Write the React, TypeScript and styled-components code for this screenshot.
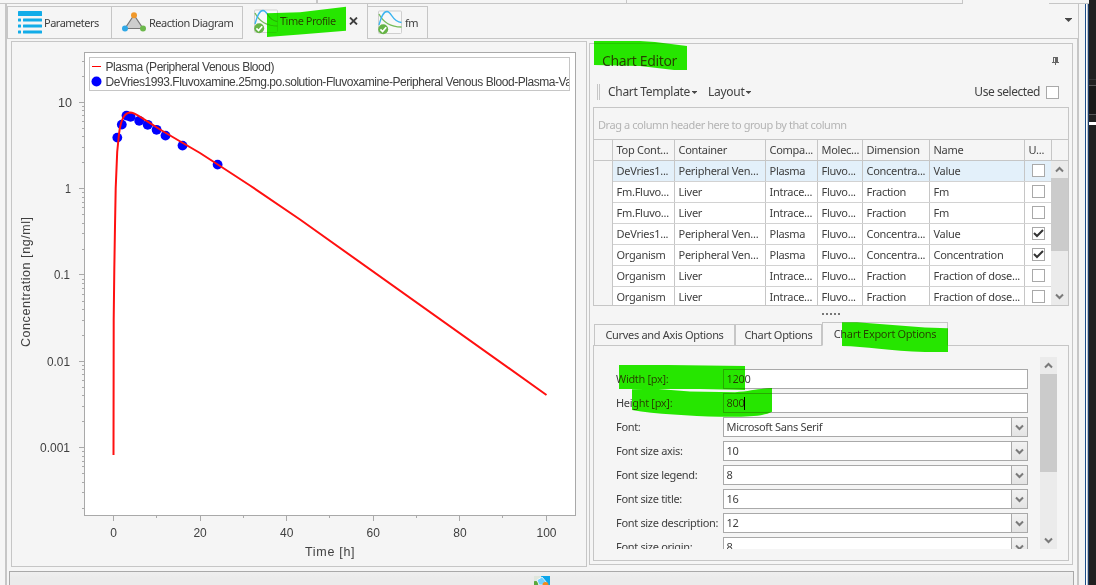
import React from "react";
import styled, { createGlobalStyle, css } from "styled-components";

const line = "#c6c6c6";
const dark = "#a9a9a9";
const ink = "#404040";
const face = "#f5f5f5";

const GlobalStyle = createGlobalStyle`
  * { box-sizing: border-box; }
  html, body { margin: 0; padding: 0; overflow: hidden; }
  body {
    background: ${face};
    color: ${ink};
    font-family: "Noto Sans", "Open Sans", sans-serif;
    font-size: 11px;
    line-height: 14px;
  }
  svg { display: block; }
`;

const Page = styled.div`
  position: relative;
  width: 1096px;
  height: 585px;
  overflow: hidden;
  display: flex;
  flex-direction: column;
  background: ${face};
`;

/* ---------- window frame ---------- */
const TopStrip = styled.div`
  display: flex;
  height: 4px;
  flex: none;
`;
const StripCell = styled.div<{ $w: number; $edge?: number; $open?: boolean }>`
  width: ${(p) => p.$w}px;
  border-bottom: ${(p) => (p.$open ? "none" : `1px solid ${line}`)};
  border-right: ${(p) => p.$edge ?? 0}px solid ${line};
`;
const DarkEdge = styled.div`
  width: 7px;
  background: #202020;
`;
const Frame = styled.div`
  display: flex;
  flex: 1;
  min-height: 0;
`;
const Gutter = styled.div`
  width: 5px;
`;
const Window = styled.div`
  width: 1074px;
  border-left: 2px solid ${line};
  border-right: 1px solid ${line};
  display: flex;
  flex-direction: column;
`;
const RightRail = styled.div`
  width: 10px;
  display: flex;
  justify-content: flex-end;
`;
const RailLine = styled.div<{ $c: string; $w?: number }>`
  width: ${(p) => p.$w ?? 1}px;
  background: ${(p) => p.$c};
`;
const Desktop = styled.div`
  width: 7px;
  background: #202020;
  display: flex;
  flex-direction: column;
`;
const DesktopBand = styled.div<{ $h: number; $c: string }>`
  height: ${(p) => p.$h}px;
  background: ${(p) => p.$c};
`;

/* ---------- document tabs ---------- */
const TabBar = styled.div`
  height: 35px;
  flex: none;
  display: flex;
  align-items: flex-end;
  border-bottom: 1px solid ${line};
`;
const DocTab = styled.div<{ $w: number; $active?: boolean }>`
  width: ${(p) => p.$w}px;
  height: ${(p) => (p.$active ? 35 : 32)}px;
  margin-bottom: ${(p) => (p.$active ? -1 : 0)}px;
  display: flex;
  align-items: center;
  white-space: nowrap;
  border: 1px solid ${line};
  border-bottom: none;
  ${(p) =>
    p.$active
      ? css`
          background: ${face};
          border-top: none;
          padding: 0 0 1px 11px;
        `
      : css`
          padding-left: 10px;
          & > svg { margin-bottom: 1px; }
        `}
  & + & { border-left-width: ${(p) => (p.$active ? 1 : 0)}px; }
`;
const TabText = styled.span<{ $gap?: number }>`
  margin-left: ${(p) => p.$gap ?? 3}px;
  letter-spacing: -0.5px;
`;
const CloseIcon = styled.svg`
  margin-left: 13px;
`;
const TabMenu = styled.div`
  margin-left: auto;
  align-self: flex-start;
  padding: 14px 6px 0 0;
`;

/* ---------- body ---------- */
const Body = styled.div`
  height: 528px;
  flex: none;
  display: flex;
  align-items: flex-start;
  padding: 2px 0 0 4px;
  border-right: 1px solid ${line};
`;
const ChartPanel = styled.div`
  width: 576px;
  height: 526px;
  border: 1px solid ${line};
`;
const Editor = styled.div`
  width: 484px;
  height: 522px;
  margin: 2px 0 0 2px;
  border: 1px solid ${line};
  padding-left: 3px;
`;
const StatusRow = styled.div`
  flex: 1;
  border-right: 1px solid ${line};
  padding: 4px 3px 0 2px;
`;
const StatusBar = styled.div`
  height: 20px;
  border: 1px solid ${dark};
  background: linear-gradient(#efefef, #ebebeb 6px);
  display: flex;
  justify-content: center;
  padding: 4px 0 0 0;
`;

/* ---------- chart editor ---------- */
const EditorTitle = styled.div`
  display: flex;
  align-items: center;
  justify-content: space-between;
  height: 33px;
  padding: 1px 13px 0 9px;
  font-size: 14px;
  letter-spacing: -0.35px;
`;
const Toolbar = styled.div`
  display: flex;
  align-items: center;
  height: 30px;
  font-size: 12px;
  padding: 0 13px 0 4px;
  letter-spacing: -0.3px;
`;
const Grip = styled.div`
  width: 3px;
  height: 16px;
  border: solid ${line};
  border-width: 0 1px;
`;
const MenuButton = styled.div`
  display: flex;
  align-items: center;
  gap: 2px;
  margin-left: 8px;
  & + & { margin-left: 11px; }
`;
const UseSelected = styled.label`
  margin-left: auto;
  display: flex;
  align-items: center;
  gap: 6px;
  letter-spacing: -0.45px;
`;
const Check = styled.span`
  width: 13px;
  height: 13px;
  flex: none;
  border: 1px solid ${dark};
  background: #fff;
`;

/* ---------- grid ---------- */
const GridBox = styled.div`
  width: 476px;
  height: 199px;
  border: 1px solid ${line};
  overflow: hidden;
`;
const GroupHint = styled.div`
  height: 32px;
  padding: 10px 0 0 4px;
  border-bottom: 1px solid ${line};
  color: #b4b4b4;
  letter-spacing: -0.43px;
`;
const GridHead = styled.div`
  display: flex;
  height: 21px;
  border-bottom: 1px solid ${line};
`;
const GridBody = styled.div`
  display: flex;
  height: 144px;
`;
const Indicator = styled.div`
  width: 19px;
  flex: none;
  border-right: 1px solid ${line};
`;
const Rows = styled.div`
  width: 438px;
  overflow: hidden;
`;
const Row = styled.div<{ $selected?: boolean }>`
  display: flex;
  height: 21px;
  background: ${(p) => (p.$selected ? "#e3f0fa" : "#fff")};
  border-bottom: 1px solid #d2d2d2;
`;
const Cell = styled.div<{ $w: number }>`
  width: ${(p) => p.$w}px;
  flex: none;
  padding: 3px 0 0 3.5px;
  border-right: 1px solid ${line};
  white-space: nowrap;
  overflow: hidden;
  letter-spacing: -0.27px;
`;
const UseCell = styled.div`
  width: 26px;
  padding: 3px 0 0 7px;
`;

/* ---------- scroll bars ---------- */
const Scroll = styled.div<{ $w: number; $h: number }>`
  width: ${(p) => p.$w}px;
  height: ${(p) => p.$h}px;
  flex: none;
  background: #ebebeb;
  display: flex;
  flex-direction: column;
`;
const ScrollButton = styled.div`
  height: 17px;
  display: flex;
  align-items: center;
  justify-content: center;
`;
const Thumb = styled.div<{ $h: number }>`
  height: ${(p) => p.$h}px;
  margin-bottom: auto;
  background: #cbcbcb;
`;

/* ---------- option tabs and form ---------- */
const Splitter = styled.div`
  height: 16px;
  display: flex;
  gap: 2px;
  justify-content: center;
  padding: 7px 4px 0 0;
  i { width: 2px; height: 2px; background: #777; }
`;
const OptionTabs = styled.div`
  display: flex;
  align-items: flex-end;
  height: 24px;
  padding-left: 1px;
  position: relative;
  margin-bottom: -1px;
`;
const OptionTab = styled.div<{ $w: number; $active?: boolean }>`
  width: ${(p) => p.$w}px;
  height: ${(p) => (p.$active ? 24 : 22)}px;
  border: 1px solid ${line};
  border-bottom-color: ${(p) => (p.$active ? face : line)};
  background: ${face};
  text-align: center;
  white-space: nowrap;
  padding-top: ${(p) => (p.$active ? 4 : 3)}px;
  letter-spacing: -0.32px;
  & + & { border-left-width: ${(p) => (p.$active ? 1 : 0)}px; }
`;
const OptionPanel = styled.div`
  width: 476px;
  height: 216px;
  border: 1px solid ${line};
  display: flex;
  padding: 11px 0 0 22px;
`;
const Form = styled.div`
  width: 412px;
  height: 192px;
  overflow: hidden;
  padding-top: 12px;
  margin-right: 12px;
`;
const Field = styled.div`
  display: flex;
  align-items: center;
  height: 20px;
  margin-bottom: 4px;
  letter-spacing: -0.32px;
`;
const FieldLabel = styled.span`
  width: 107px;
  white-space: nowrap;
`;
const Input = styled.div`
  width: 305px;
  height: 20px;
  border: 1px solid ${dark};
  background: #fff;
  display: flex;
  justify-content: space-between;
  line-height: 18px;
  padding-left: 2.5px;
`;
const Caret = styled.span`
  display: inline-block;
  width: 1px;
  height: 13px;
  background: #000;
  vertical-align: -3px;
`;
const DropButton = styled.div`
  width: 16px;
  border-left: 1px solid ${dark};
  background: linear-gradient(#f2f2f2, #e4e4e4);
  display: flex;
  align-items: center;
  justify-content: center;
`;

/* ---------- marker strokes over the page ---------- */
const Marker = styled.svg`
  position: absolute;
  left: 0;
  top: 0;
  mix-blend-mode: darken;
  pointer-events: none;
`;

const Chevron = ({ up }: { up?: boolean }) => (
  <svg width="9" height="7" viewBox="0 0 9 7">
    <path d={up ? "M1 5.5 L4.5 2 L8 5.5" : "M1 1.5 L4.5 5 L8 1.5"} fill="none" stroke="#7a7a7a" strokeWidth="2" />
  </svg>
);
const Arrow = ({ w = 5 }: { w?: number }) => (
  <svg width={w} height={(w + 1) / 2} viewBox={`0 0 ${w} ${(w + 1) / 2}`}>
    <path d={`M0 0H${w}V.6L${w / 2} ${(w + 1) / 2}L0 .6Z`} fill="#484848" />
  </svg>
);

const ListIcon = () => (
  <svg width="24" height="23" viewBox="0 0 24 23" fill="#12ace8">
    <rect width="24" height="5" rx=".6" />
    {[7.5, 13.5, 19.5].map((y) => (
      <g key={y}>
        <rect y={y} width="3" height="3" rx=".5" />
        <rect x="5" y={y} width="19" height="3" rx=".5" />
      </g>
    ))}
  </svg>
);
const TriangleIcon = () => (
  <svg width="24" height="20" viewBox="0 0 24 20">
    <path d="M12 3 L3 16.5 H21 Z" fill="#cdcdcd" stroke="#777" strokeWidth="1.2" />
    <circle cx="12" cy="3.2" r="3" fill="#f0982a" />
    <circle cx="3" cy="16.5" r="3" fill="#2fa8e6" />
    <circle cx="21" cy="16.5" r="3" fill="#6cb84c" />
  </svg>
);
const CurveIcon = () => (
  <svg width="24" height="25" viewBox="0 0 24 25">
    <rect x=".5" y="1" width="23" height="22.5" rx="1" fill="#f8f8f8" stroke="#cfcfcf" />
    <path d="M1 4 C5 12 12 17 23.5 17" fill="none" stroke="#76bc5a" strokeWidth="1.3" />
    <path d="M1 15 C3 8 5 1.5 9 1.5 C14 2 14 12 23.5 12.5" fill="none" stroke="#3db4ef" strokeWidth="1.3" />
    <circle cx="5.2" cy="19.3" r="5" fill="#66b446" />
    <path d="M2.4 19.3 L4.6 21.5 L8.2 17.3" fill="none" stroke="#fff" strokeWidth="1.7" />
  </svg>
);
const ImageIcon = () => (
  <svg width="16" height="9" viewBox="0 0 16 9">
    <rect width="16" height="9" fill="#0aa5ea" />
    <rect width="7" height="9" fill="#dfe6dc" />
    <circle cx="1.5" cy="8" r="3" fill="#5aa83c" />
    <path d="M3 4 L8 1 L13 7 L9 9 H5Z" fill="#6fd0ff" stroke="#fff" strokeWidth=".8" />
    <circle cx="11.5" cy="9" r="3" fill="#f18a1c" />
  </svg>
);
const PinIcon = () => (
  <svg width="7" height="8" viewBox="0 0 7 8" fill="#666">
    <path d="M1 0H6V5H7V6H4V8H3V6H0V5H1Z M2 1V5H3V1Z" fillRule="evenodd" />
  </svg>
);
const CheckMark = () => (
  <svg width="11" height="11" viewBox="0 0 11 11">
    <path d="M1 5 L4 8 L10 2" fill="none" stroke="#333" strokeWidth="2" />
  </svg>
);

const points = [
  [117.3, 137.6], [121.8, 124.6], [126.5, 115.6], [130.6, 116.9], [139.2, 120.8],
  [147.7, 124.8], [156.6, 129.8], [165.5, 135.6], [182.5, 145.6], [217.6, 164.6],
];
const decades: [string, number][] = [
  ["10", 102.5], ["1", 188.5], ["0.1", 274.5], ["0.01", 361.5], ["0.001", 447.5],
];
const minorY: number[] = [];
for (let d = 0; d < 7; d++)
  for (let k = 2; k < 10; k++) {
    const y = Math.round(102 - 86.3 * (1 - d + Math.log10(k))) + 0.5;
    if (y > 58 && y < 514) minorY.push(y);
  }

const Chart = () => (
  <svg width="574" height="524" viewBox="12 42 574 524" fontFamily="'Liberation Sans', Arial, sans-serif" fill={ink}>
    <defs>
      <clipPath id="legend"><rect x="90" y="57" width="479" height="33" /></clipPath>
    </defs>
    <rect x="84.5" y="52.5" width="491" height="463" fill="#fff" stroke={dark} />
    <g stroke={dark}>
      {decades.map(([t, y]) => <path key={t} d={`M79 ${y}H84`} />)}
      {minorY.map((y) => <path key={y} d={`M82 ${y}H84`} />)}
      {[0, 1, 2, 3, 4, 5].map((i) => (
        <path key={i} d={`M${Math.round(113 + i * 86.6) + 0.5} 516V521`} />
      ))}
      {[0, 1, 2, 3, 4].map((i) => (
        <path key={i} d={`M${Math.round(156 + i * 86.6) + 0.5} 516V518`} />
      ))}
    </g>
    <g fontSize="12">
      {([["10", 58, 14], ["1", 65, 6], ["0.1", 54, 16], ["0.01", 47, 23], ["0.001", 40, 30]] as [string, number, number][]).map(
        ([t, x, w], i) => (
          <text key={t} x={x} y={decades[i][1] + 4} textLength={w} lengthAdjust="spacingAndGlyphs">{t}</text>
        )
      )}
      {[0, 20, 40, 60, 80, 100].map((v, i) => (
        <text key={v} x={113.5 + i * 86.6} y="536.5" textAnchor="middle">{v}</text>
      ))}
      <text x="305" y="556" textLength="49.5" fontSize="12.5">Time [h]</text>
      <text transform="translate(29.5 347) rotate(-90)" textLength="130" fontSize="12.5">Concentration [ng/ml]</text>
    </g>
    <g fill="#0000ff">
      {points.map(([x, y]) => <circle key={x} cx={x} cy={y} r="4.9" />)}
    </g>
    <path
      d="M113.5 455 L113.7 320 L114.3 270 L115 226 L115.7 188 L117.2 152 L119 134 C120.5 122 124 112.8 130 112.6 C134 112.6 138 115.5 143 118.7 L160 129.5 L182 142.5 L200 153 L217 164 L250 185.5 L300 219.5 L546.5 395"
      fill="none"
      stroke="#ff1010"
      strokeWidth="2"
    />
    <rect x="89.5" y="57.5" width="480" height="33" fill="#fff" stroke={line} />
    <path d="M92 66.5H101" stroke="#ff0000" />
    <circle cx="96.5" cy="81.5" r="5" fill="#0000ff" />
    <g fontSize="12" clipPath="url(#legend)">
      <text x="105.5" y="71" textLength="169">Plasma (Peripheral Venous Blood)</text>
      <text x="105.5" y="86" textLength="481">DeVries1993.Fluvoxamine.25mg.po.solution-Fluvoxamine-Peripheral Venous Blood-Plasma-Value</text>
    </g>
  </svg>
);

const widths = [62, 91, 52, 45, 67, 95];
const heads = ["Top Cont...", "Container", "Compa...", "Molec...", "Dimension", "Name"];
const rows: { cells: string[]; on?: boolean }[] = [
  { cells: ["DeVries1...", "Peripheral Ven...", "Plasma", "Fluvo...", "Concentra...", "Value"] },
  { cells: ["Fm.Fluvo...", "Liver", "Intrace...", "Fluvo...", "Fraction", "Fm"] },
  { cells: ["Fm.Fluvo...", "Liver", "Intrace...", "Fluvo...", "Fraction", "Fm"] },
  { cells: ["DeVries1...", "Peripheral Ven...", "Plasma", "Fluvo...", "Concentra...", "Value"], on: true },
  { cells: ["Organism", "Peripheral Ven...", "Plasma", "Fluvo...", "Concentra...", "Concentration"], on: true },
  { cells: ["Organism", "Liver", "Intrace...", "Fluvo...", "Fraction", "Fraction of dose..."] },
  { cells: ["Organism", "Liver", "Intrace...", "Fluvo...", "Fraction", "Fraction of dose..."] },
];
const fields: { label: string; value: string; drop?: boolean; caret?: boolean }[] = [
  { label: "Width [px]:", value: "1200" },
  { label: "Height [px]:", value: "800", caret: true },
  { label: "Font:", value: "Microsoft Sans Serif", drop: true },
  { label: "Font size axis:", value: "10", drop: true },
  { label: "Font size legend:", value: "8", drop: true },
  { label: "Font size title:", value: "16", drop: true },
  { label: "Font size description:", value: "12", drop: true },
  { label: "Font size origin:", value: "8", drop: true },
];

export default function App() {
  return (
    <Page>
      <GlobalStyle />
      <TopStrip>
        <StripCell $w={318} $edge={2} />
        <StripCell $w={309} $edge={1} />
        <StripCell $w={336} $edge={1} />
        <StripCell $w={86} $open />
        <StripCell $w={40} />
        <DarkEdge />
      </TopStrip>
      <Frame>
        <Gutter />
        <Window>
          <TabBar>
            <DocTab $w={105}><ListIcon /><TabText $gap={2}>Parameters</TabText></DocTab>
            <DocTab $w={131}><TriangleIcon /><TabText>Reaction Diagram</TabText></DocTab>
            <DocTab $w={125} $active>
              <CurveIcon />
              <TabText $gap={2}>Time Profile</TabText>
              <CloseIcon width="9" height="8" viewBox="0 0 9 8">
                <path d="M1 .5 L8 7.5 M8 .5 L1 7.5" stroke="#404040" strokeWidth="1.8" />
              </CloseIcon>
            </DocTab>
            <DocTab $w={60}><CurveIcon /><TabText>fm</TabText></DocTab>
            <TabMenu><Arrow w={7} /></TabMenu>
          </TabBar>
          <Body>
            <ChartPanel><Chart /></ChartPanel>
            <Editor>
              <EditorTitle>Chart Editor<PinIcon /></EditorTitle>
              <Toolbar>
                <Grip />
                <MenuButton>Chart Template<Arrow /></MenuButton>
                <MenuButton>Layout<Arrow /></MenuButton>
                <UseSelected>Use selected<Check /></UseSelected>
              </Toolbar>
              <GridBox>
                <GroupHint>Drag a column header here to group by that column</GroupHint>
                <GridHead>
                  <Indicator />
                  {heads.map((h, i) => <Cell key={h} $w={widths[i]}>{h}</Cell>)}
                  <Cell $w={27}>U...</Cell>
                </GridHead>
                <GridBody>
                  <Indicator />
                  <Rows>
                    {rows.map((r, i) => (
                      <Row key={i} $selected={i === 0}>
                        {r.cells.map((c, j) => <Cell key={j} $w={widths[j]}>{c}</Cell>)}
                        <UseCell>
                          <Check as="div">{r.on && <CheckMark />}</Check>
                        </UseCell>
                      </Row>
                    ))}
                  </Rows>
                  <Scroll $w={17} $h={144}>
                    <ScrollButton><Chevron up /></ScrollButton>
                    <Thumb $h={73} />
                    <ScrollButton><Chevron /></ScrollButton>
                  </Scroll>
                </GridBody>
              </GridBox>
              <Splitter><i /><i /><i /><i /><i /></Splitter>
              <OptionTabs>
                <OptionTab $w={141}>Curves and Axis Options</OptionTab>
                <OptionTab $w={87}>Chart Options</OptionTab>
                <OptionTab $w={126} $active>Chart Export Options</OptionTab>
              </OptionTabs>
              <OptionPanel>
                <Form>
                  {fields.map((f) => (
                    <Field key={f.label}>
                      <FieldLabel>{f.label}</FieldLabel>
                      <Input>
                        <span>{f.value}{f.caret && <Caret />}</span>
                        {f.drop && <DropButton><Chevron /></DropButton>}
                      </Input>
                    </Field>
                  ))}
                </Form>
                <Scroll $w={17} $h={192}>
                  <ScrollButton><Chevron up /></ScrollButton>
                  <Thumb $h={98} />
                  <ScrollButton><Chevron /></ScrollButton>
                </Scroll>
              </OptionPanel>
            </Editor>
          </Body>
          <StatusRow><StatusBar><ImageIcon /></StatusBar></StatusRow>
        </Window>
        <RightRail>
          <RailLine $c="#1d4f8c" />
          <RailLine $c="#fff" />
          <RailLine $c="#b9c2cc" />
          <RailLine $c="#1d3a66" />
        </RightRail>
        <Desktop>
          <DesktopBand $h={75} $c="#202020" />
          <DesktopBand $h={1} $c="#333" />
          <DesktopBand $h={5} $c="#202020" />
          <DesktopBand $h={1} $c="#555" />
          <DesktopBand $h={28} $c="#181818" />
          <DesktopBand $h={1} $c="#555" />
          <DesktopBand $h={7} $c="#202020" />
          <DesktopBand $h={3} $c="#fff" />
        </Desktop>
      </Frame>
      <Marker width="1096" height="585" viewBox="0 0 1096 585" fill="#26e600">
        <path d="M267 13.3 L300 12.3 L346 6.7 V30.7 L300 34.5 L267 37Z" />
        <path d="M594 41 H640 L655 42 L687 46 V70 H674 L640 66 L594 65Z" />
        <path d="M842 322.3 H857 L925 327.5 L948 328.2 V352 H925 C890 351 865 346.5 842 346Z" />
        <path d="M619 365 H668 L745 366 V390 L700 389 H619Z" />
        <path d="M632 389.3 L655 388.8 L690 391.5 L735 392.3 C752 391 762 388 772 388 V411.8 C762 417 745 417 720 416.8 C690 416 655 414 632 410Z" />
      </Marker>
    </Page>
  );
}
